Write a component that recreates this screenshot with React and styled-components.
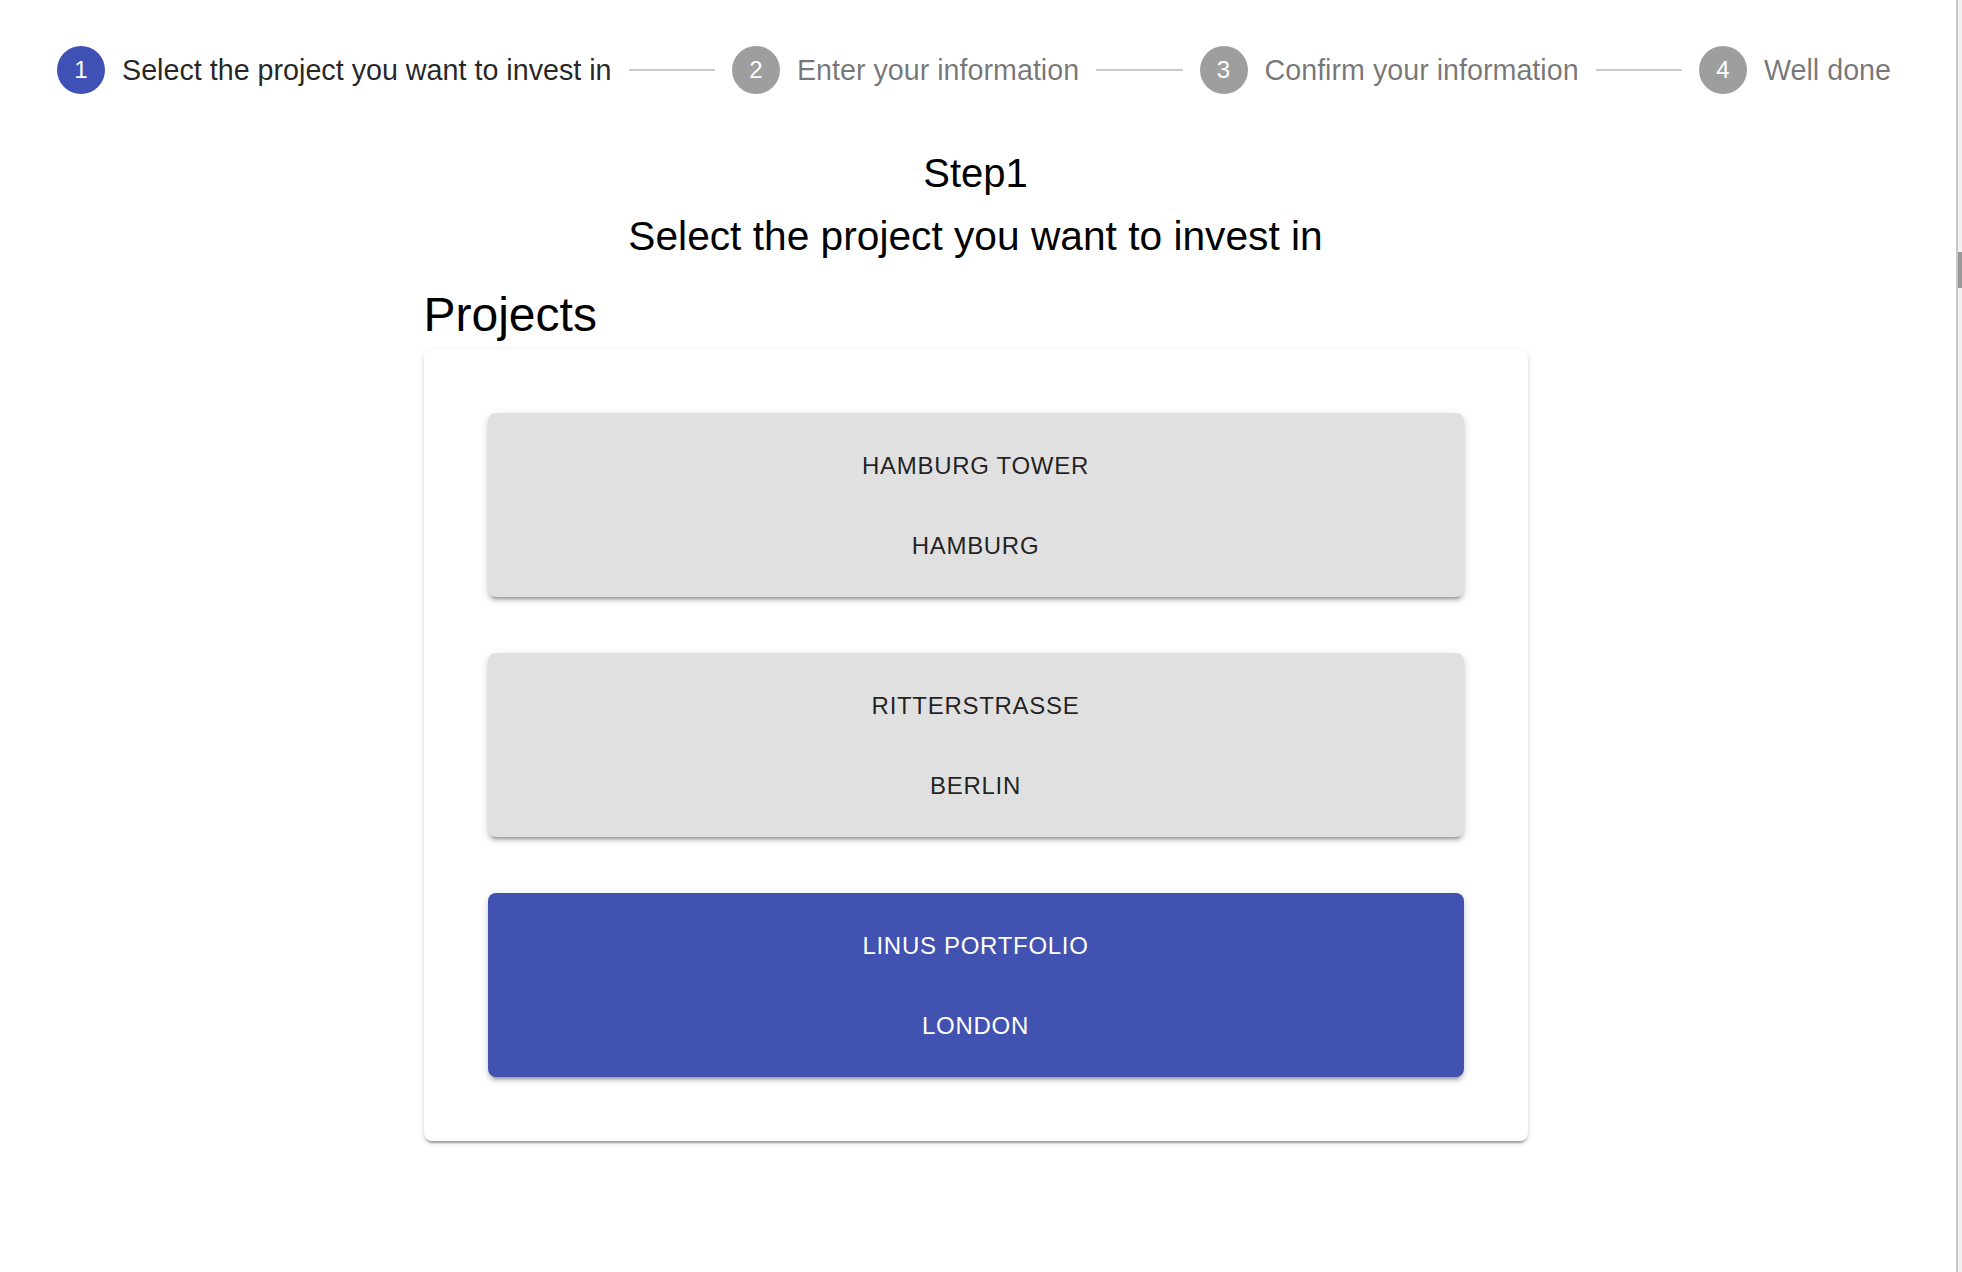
import React from "react";
import styled, { createGlobalStyle } from "styled-components";

const GlobalStyle = createGlobalStyle`
  html, body {
    margin: 0;
    padding: 0;
    background: #ffffff;
  }
  body {
    font-family: "Liberation Sans", Arial, Helvetica, sans-serif;
  }
`;

const steps = [
  "Select the project you want to invest in",
  "Enter your information",
  "Confirm your information",
  "Well done",
];

const projects = [
  { name: "HAMBURG TOWER", city: "HAMBURG" },
  { name: "RITTERSTRASSE", city: "BERLIN" },
  { name: "LINUS PORTFOLIO", city: "LONDON" },
];

const App = () => {
  const activeStep = 0;
  const selected = 2;

  return (
    <>
      <GlobalStyle />
      <Page>
        <Main>
          <Stepper>
            {steps.map((label, i) => (
              <React.Fragment key={label}>
                {i > 0 && <Connector />}
                <Step>
                  <StepIcon active={i === activeStep}>{i + 1}</StepIcon>
                  <StepLabel active={i === activeStep}>{label}</StepLabel>
                </Step>
              </React.Fragment>
            ))}
          </Stepper>

          <Title>Step1</Title>
          <Subtitle>Select the project you want to invest in</Subtitle>

          <ProjectsSection>
            <SectionHeading>Projects</SectionHeading>
            <Card>
              {projects.map((p, i) => (
                <ProjectButton key={p.name} selected={i === selected}>
                  <ButtonLine>{p.name}</ButtonLine>
                  <ButtonLine>{p.city}</ButtonLine>
                </ProjectButton>
              ))}
            </Card>
          </ProjectsSection>
        </Main>

        <ScrollTrack>
          <ScrollThumb />
        </ScrollTrack>
      </Page>
    </>
  );
};

const Page = styled.div`
  display: flex;
  min-height: 100vh;
`;

const Main = styled.main`
  flex: 1;
  display: flex;
  flex-direction: column;
  align-items: center;
  padding-right: 5px;
`;

const Stepper = styled.div`
  align-self: stretch;
  display: flex;
  align-items: center;
  padding: 46px 60px 0 57px;
`;

const Step = styled.div`
  display: flex;
  align-items: center;
  gap: 17px;
  flex-shrink: 0;
`;

const StepIcon = styled.div`
  width: 48px;
  height: 48px;
  border-radius: 50%;
  background: ${(p) => (p.active ? "#3f51b5" : "#9e9e9e")};
  color: #ffffff;
  font-size: 24px;
  display: flex;
  align-items: center;
  justify-content: center;
`;

const StepLabel = styled.span`
  font-size: 28.7px;
  line-height: 34px;
  white-space: nowrap;
  color: ${(p) => (p.active ? "rgba(0, 0, 0, 0.87)" : "rgba(0, 0, 0, 0.54)")};
`;

const Connector = styled.div`
  flex: 1;
  margin: 0 17px;
  border-top: 2px solid #cacaca;
`;

const Title = styled.h2`
  margin: 55px 0 0;
  font-size: 40px;
  line-height: 48px;
  font-weight: 400;
  color: #000000;
`;

const Subtitle = styled.h3`
  margin: 15px 0 0;
  font-size: 40.7px;
  line-height: 48px;
  font-weight: 400;
  color: #000000;
`;

const ProjectsSection = styled.section`
  width: 1104px;
  margin-top: 27px;
  display: flex;
  flex-direction: column;
  gap: 6px;
`;

const SectionHeading = styled.h1`
  margin: 0;
  font-size: 48px;
  line-height: 56px;
  font-weight: 400;
  color: #000000;
`;

const Card = styled.div`
  background: #ffffff;
  border-radius: 8px;
  padding: 64px;
  display: flex;
  flex-direction: column;
  gap: 56px;
  box-shadow: 0 4px 2px -2px rgba(0, 0, 0, 0.2), 0 2px 2px 0 rgba(0, 0, 0, 0.14),
    0 2px 6px 0 rgba(0, 0, 0, 0.12);
`;

const ProjectButton = styled.button`
  display: flex;
  flex-direction: column;
  align-items: center;
  gap: 48px;
  padding: 37px 0 35px;
  border: none;
  border-radius: 8px;
  background: ${(p) => (p.selected ? "#4152b0" : "#e0e0e0")};
  color: ${(p) => (p.selected ? "#ffffff" : "rgba(0, 0, 0, 0.87)")};
  font-family: "Liberation Sans", Arial, sans-serif;
  font-size: 24px;
  letter-spacing: 0.7px;
  text-transform: uppercase;
  cursor: pointer;
  box-shadow: 0 6px 2px -4px rgba(0, 0, 0, 0.2), 0 4px 4px 0 rgba(0, 0, 0, 0.14),
    0 2px 10px 0 rgba(0, 0, 0, 0.12);
`;

const ButtonLine = styled.span`
  line-height: 32px;
`;

const ScrollTrack = styled.div`
  width: 4px;
  border-left: 2px solid #c8c8c8;
  background: #f1f1f1;
  display: flex;
  flex-direction: column;
`;

const ScrollThumb = styled.div`
  margin-top: 252px;
  height: 36px;
  background: #999999;
`;

export default App;
